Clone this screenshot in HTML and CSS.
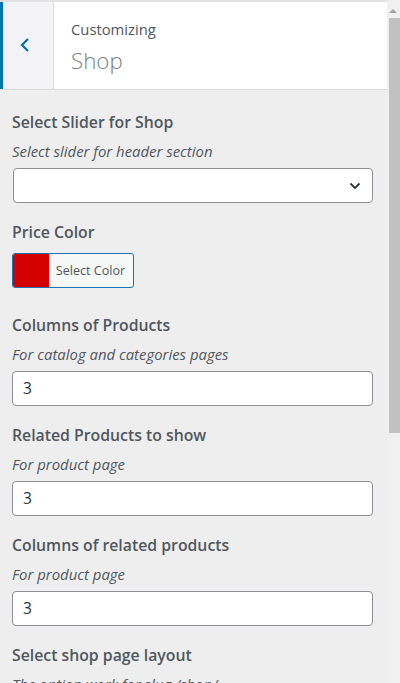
FILE: index.html
```html
<!DOCTYPE html>
<html>
<head>
<meta charset="utf-8">
<link rel="stylesheet" href="styles.css">
</head>
<body>
<div class="frame">
  <div class="panel">
    <div class="header">
      <button class="back" aria-label="Back">
        <svg width="12" height="16" viewBox="0 0 12 16"><path d="M9 2 L3 8 L9 14" fill="none" stroke="#0073aa" stroke-width="2.2"/></svg>
      </button>
      <div class="title">
        <span class="crumb">Customizing</span>
        <h3 class="section">Shop</h3>
      </div>
    </div>
    <div class="controls">
      <div class="control">
        <span class="label">Select Slider for Shop</span>
        <span class="desc">Select slider for header section</span>
        <div class="select">
          <svg width="12" height="8" viewBox="0 0 12 8"><path d="M1.5 1.5 L6 6 L10.5 1.5" fill="none" stroke="#2c3338" stroke-width="1.8"/></svg>
        </div>
      </div>
      <div class="control color-control">
        <span class="label">Price Color</span>
        <button class="color-btn"><span class="swatch"></span><span class="color-text">Select Color</span></button>
      </div>
      <div class="control">
        <span class="label">Columns of Products</span>
        <span class="desc">For catalog and categories pages</span>
        <div class="input">3</div>
      </div>
      <div class="control">
        <span class="label">Related Products to show</span>
        <span class="desc">For product page</span>
        <div class="input">3</div>
      </div>
      <div class="control">
        <span class="label">Columns of related products</span>
        <span class="desc">For product page</span>
        <div class="input">3</div>
      </div>
      <div class="control">
        <span class="label">Select shop page layout</span>
        <span class="desc">The option work for slug /shop/</span>
      </div>
    </div>
  </div>
  <div class="scrollbar">
    <div class="arrow"></div>
    <div class="thumb"></div>
  </div>
</div>
</body>
</html>
```
FILE: styles.css
```css
* { box-sizing: border-box; }
html, body { margin: 0; padding: 0; height: 100%; overflow: hidden; }
body {
  font-family: "Open Sans", "Noto Sans", sans-serif;
  background: #eeeeee;
  color: #50575e;
}
.frame {
  display: flex;
  height: 683px;
  overflow: hidden;
}
.panel {
  flex: 1;
  display: flex;
  flex-direction: column;
  background: #eeeeee;
  min-width: 0;
}
.header {
  flex-shrink: 0;
  display: flex;
  height: 90px;
  border-top: 2px solid #e2e2e2;
  border-bottom: 1px solid #dcdcde;
  background: #fff;
}
.back {
  width: 54px;
  border: 0;
  border-left: 3px solid #0073aa;
  border-right: 1px solid #dcdcde;
  background: #f3f3f5;
  display: flex;
  align-items: center;
  justify-content: center;
  padding: 0 6px 2px 0;
  margin: 0;
}
.title {
  display: flex;
  flex-direction: column;
  padding: 16px 0 0 17px;
}
.crumb {
  font-size: 14.8px;
  line-height: 22px;
  color: #50575e;
}
.section {
  margin: 7px 0 0;
  font-size: 22.3px;
  font-weight: 300;
  line-height: 28px;
  color: #7a7f84;
}
.controls {
  flex-shrink: 0;
  padding: 22px 14px 0 12px;
  display: flex;
  flex-direction: column;
}
.control {
  display: flex;
  flex-direction: column;
  margin-bottom: 19px;
}
.label {
  font-size: 15.8px;
  font-weight: 600;
  line-height: 20px;
  color: #50575e;
  margin-bottom: 9px;
}
.desc {
  font-size: 14.9px;
  font-style: italic;
  line-height: 20px;
  color: #50575e;
  margin-bottom: 7px;
}
.select {
  height: 35px;
  margin-left: 1px;
  background: #fff;
  border: 1px solid #8c8f94;
  border-radius: 4px;
  display: flex;
  align-items: center;
  justify-content: flex-end;
  padding-right: 11px;
}
.color-control .label { margin-bottom: 11px; }
.color-control { margin-bottom: 27px; }
.color-btn {
  align-self: flex-start;
  display: flex;
  height: 35px;
  width: 122px;
  padding: 0;
  border: 1px solid #2271b1;
  border-radius: 3px;
  background: #f6f7f7;
  overflow: hidden;
  font-family: inherit;
}
.swatch {
  width: 36px;
  height: 100%;
  background: #d20000;
}
.color-text {
  flex: 1;
  font-size: 12.6px;
  line-height: 33px;
  color: #50575e;
  text-align: center;
  padding-right: 1px;
}
.input {
  height: 35px;
  background: #fff;
  border: 1px solid #8c8f94;
  border-radius: 4px;
  padding-left: 10px;
  font-size: 15.5px;
  line-height: 33px;
  color: #2c3338;
}
.scrollbar {
  width: 13px;
  background: #f0f0f0;
  display: flex;
  flex-direction: column;
  align-items: flex-end;
}
.arrow {
  width: 0;
  height: 0;
  margin: 9px 3px 5px 0;
  border-left: 4px solid transparent;
  border-right: 4px solid transparent;
  border-bottom: 4px solid #a3a3a3;
}
.thumb {
  width: 11px;
  height: 415px;
  background: #c1c1c1;
}
```
